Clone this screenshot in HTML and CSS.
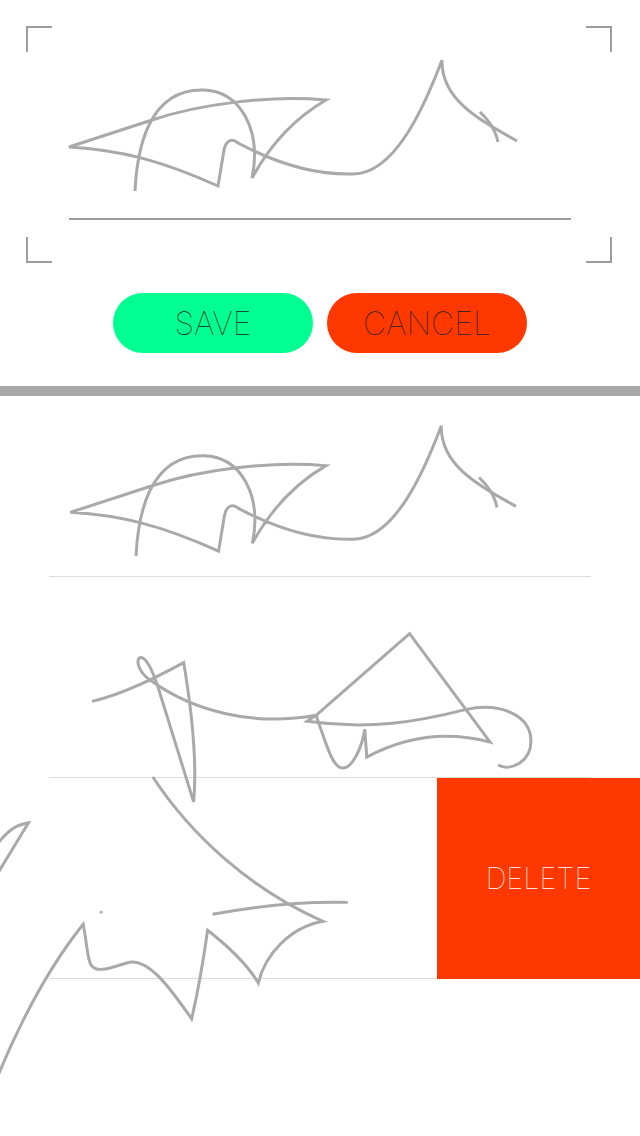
FILE: index.html
```html
<!DOCTYPE html>
<html>
<head>
<meta charset="utf-8">
<title>Signatures</title>
<link rel="stylesheet" href="styles.css">
</head>
<body>
    <div class="capture">
        <span class="corner top-left"></span>
        <span class="corner top-right"></span>
        <span class="corner bottom-left"></span>
        <span class="corner bottom-right"></span>
        <svg class="pad" viewBox="0 0 640 218">
            <g class="ink">
                <path d="M135 191C137 150 148 89 203 90C240 90 262 130 252 178C270 145 295 118 326 100C270 95 200 104 152 120L69 147C120 150 160 160 218 186L224 150C226 140 232 138 238 143C270 160 310 175 352 174C395 175 425 105 442 60C441 100 480 120 517 141"/>
                <path d="M480 112C488 120 495 128 498 142"/>
            </g>
        </svg>
        <div class="sign-line"></div>
        <div class="actions">
            <button class="button save">SAVE</button>
            <button class="button cancel">CANCEL</button>
        </div>
    </div>
    <div class="divider"></div>
    <div class="list">
        <div class="row first">
            <svg class="sketch" viewBox="0 30 640 181">
                <g class="ink">
                    <path d="M135 191C137 150 148 89 203 90C240 90 262 130 252 178C270 145 295 118 326 100C270 95 200 104 152 120L69 147C120 150 160 160 218 186L224 150C226 140 232 138 238 143C270 160 310 175 352 174C395 175 425 105 442 60C441 100 480 120 517 141"/>
                    <path d="M480 112C488 120 495 128 498 142"/>
                </g>
            </svg>
        </div>
        <div class="row">
            <svg class="sketch" viewBox="0 577 640 201">
                <g class="ink">
                    <path d="M91 702C122 695 155 678 183 663C190 705 197 760 193 803L157 687C152 672 147 660 141 658C134 657 136 672 150 681C190 710 250 728 316 716L307 722C370 731 420 722 467 710C500 703 532 715 532 742C532 762 512 773 499 766"/>
                    <path d="M316 716L410 634L491 743C450 732 410 735 367 758L365 730C362 750 352 769 343 769C333 769 328 750 316 716"/>
                </g>
            </svg>
        </div>
        <div class="row">
            <div class="delete">DELETE</div>
            <svg class="sketch" viewBox="0 778 640 201">
                <g class="ink">
                    <path d="M-4 1078C20 1020 50 965 82 925C86 945 86 960 90 966C97 976 115 966 130 963C150 962 170 990 191 1020C198 990 203 960 207 931C225 945 245 962 258 984C265 955 290 928 323 922C250 890 190 835 152 777"/>
                    <path d="M212 915C260 906 305 902 348 903"/>
                    <path d="M-4 874L27 823C15 825 7 830 -4 844"/>
                </g>
                <circle class="dot" cx="100" cy="913" r="1.5"/>
            </svg>
        </div>
    </div>
</body>
</html>
```

FILE: styles.css
```css
html, body {
    margin: 0;
    height: 1136px;
    overflow: hidden;
    background-color: white;
    font-family: Inter, "Liberation Sans", sans-serif;
}
.capture {
    position: relative;
    height: 386px;
}
.pad {
    display: block;
    width: 640px;
    height: 218px;
    overflow: visible;
}
.ink {
    fill: none;
    stroke: #a9a9a9;
    stroke-width: 3;
    stroke-linejoin: miter;
}
.dot {
    fill: #a9a9a9;
}
.corner {
    position: absolute;
    width: 24px;
    height: 24px;
    border: 0 solid #9c9c9c;
}
.top-left {
    top: 26px;
    left: 26px;
    border-width: 2px 0 0 2px;
}
.top-right {
    top: 26px;
    right: 28px;
    border-width: 2px 2px 0 0;
}
.bottom-left {
    top: 237px;
    left: 26px;
    border-width: 0 0 2px 2px;
}
.bottom-right {
    top: 237px;
    right: 28px;
    border-width: 0 2px 2px 0;
}
.sign-line {
    height: 2px;
    margin: 0 69px;
    background-color: #9c9c9c;
}
.actions {
    display: flex;
    justify-content: center;
    gap: 14px;
    margin-top: 73px;
}
.button {
    width: 200px;
    height: 60px;
    padding: 0;
    border: none;
    border-radius: 30px;
    font-family: inherit;
    font-size: 32px;
    font-weight: 100;
    color: #222;
}
.save {
    background-color: #00ff90;
}
.cancel {
    background-color: #ff3800;
}
.divider {
    height: 10px;
    background-color: #a8a8a8;
}
.row {
    position: relative;
    height: 200px;
    margin: 0 49px;
    border-bottom: 1px solid #dcdcdc;
}
.row.first {
    height: 180px;
}
.sketch {
    position: absolute;
    top: 0;
    left: -49px;
    width: 640px;
    height: 100%;
    overflow: visible;
}
.delete {
    position: absolute;
    top: 0;
    bottom: -1px;
    left: 388px;
    width: 203px;
    display: flex;
    align-items: center;
    justify-content: center;
    background-color: #ff3800;
    font-size: 29px;
    font-weight: 100;
    color: white;
}
```
